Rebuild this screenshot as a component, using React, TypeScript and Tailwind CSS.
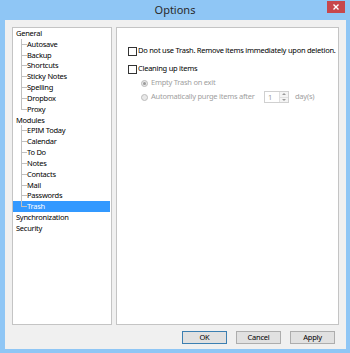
import React from "react";

const font = { fontFamily: '"Noto Sans", "Segoe UI", sans-serif' };

type Node = { label: string; children?: string[] };
const tree: Node[] = [
  { label: "General", children: ["Autosave", "Backup", "Shortcuts", "Sticky Notes", "Spelling", "Dropbox", "Proxy"] },
  { label: "Modules", children: ["EPIM Today", "Calendar", "To Do", "Notes", "Contacts", "Mail", "Passwords", "Trash"] },
  { label: "Synchronization" },
  { label: "Security" },
];

function Row({ label, child, last, selected }: { label: string; child?: boolean; last?: boolean; selected?: boolean }) {
  return (
    <div className={`flex h-[10.83px] items-stretch ${selected ? "bg-[#3399ff] mr-[1px]" : ""}`}>
      {child ? (
        <div className="ml-[8px] w-[6px] flex flex-col">
          <div className="flex-1 border-l border-b border-[#c0c0c0]" />
          <div className={`flex-1 ${last ? "" : "border-l border-[#c0c0c0]"}`} />
        </div>
      ) : (
        <div className="w-[3px]" />
      )}
      <span className={`leading-[10.83px] whitespace-nowrap ${selected ? "text-white" : "text-black"}`}>{label}</span>
    </div>
  );
}

export default function App() {
  return (
    <div className="w-[350px] h-[353px] bg-[#8fc6f5] flex flex-col text-[7.5px] tracking-[-0.25px]" style={font}>
      <div className="h-[20px] relative flex items-center justify-center shrink-0">
        <span className="text-[11px] tracking-normal text-[#2a2a2a]">Options</span>
        <div className="absolute right-[5px] top-[1px] w-[18px] h-[12px] bg-[#c7474c] flex items-center justify-center">
          <svg width="6" height="6" viewBox="0 0 6 6">
            <path d="M0.5 0.5 L5.5 5.5 M5.5 0.5 L0.5 5.5" stroke="white" strokeWidth="1.4" />
          </svg>
        </div>
      </div>
      <div className="flex-1 ml-[5px] mr-[4px] mb-[4px] bg-[#f0f0f0] flex flex-col px-[7px] pt-[7px]">
        <div className="flex gap-[4px] h-[298px]">
          <div className="w-[100px] bg-white border border-[#c4c4c4]">
            {tree.map((n) => (
              <React.Fragment key={n.label}>
                <Row label={n.label} />
                {n.children?.map((c, i) => (
                  <Row key={c} label={c} child last={i === n.children!.length - 1} selected={c === "Trash"} />
                ))}
              </React.Fragment>
            ))}
          </div>
          <div className="flex-1 bg-white border border-[#c4c4c4] pl-[11px] pt-[18px] whitespace-nowrap">
            <div className="flex items-center gap-[1px] h-[10px]">
              <span className="w-[9px] h-[9px] border border-[#333] bg-white shrink-0" />
              <span className="text-black">Do not use Trash. Remove items immediately upon deletion.</span>
            </div>
            <div className="flex items-center gap-[1px] h-[10px] mt-[8px]">
              <span className="w-[9px] h-[9px] border border-[#333] bg-white shrink-0" />
              <span className="text-black">Cleaning up items</span>
            </div>
            <div className="flex items-center h-[10px] mt-[4px] ml-[13px] gap-[3px]">
              <span className="w-[7px] h-[7px] rounded-full border border-[#bcbcbc] bg-[#e8e8e8] flex items-center justify-center">
                <span className="w-[3px] h-[3px] rounded-full bg-[#9a9a9a]" />
              </span>
              <span className="text-[#a0a0a0]">Empty Trash on exit</span>
            </div>
            <div className="flex items-center h-[12px] mt-[3px] ml-[13px] gap-[3px]">
              <span className="w-[7px] h-[7px] rounded-full border border-[#bcbcbc] bg-[#e8e8e8] shrink-0" />
              <span className="text-[#a0a0a0] w-[110px]">Automatically purge items after</span>
              <div className="w-[25px] h-[12px] border border-[#d0d0d0] bg-white flex">
                <span className="flex-1 text-[#a0a0a0] pl-[3px] leading-[10px]">1</span>
                <div className="w-[9px] flex flex-col border-l border-[#e0e0e0]">
                  <div className="flex-1 bg-[#f4f4f4] flex items-center justify-center border-b border-[#e0e0e0]">
                    <svg width="4" height="2" viewBox="0 0 4 2"><path d="M0 2 L2 0 L4 2 Z" fill="#9a9a9a" /></svg>
                  </div>
                  <div className="flex-1 bg-[#f4f4f4] flex items-center justify-center">
                    <svg width="4" height="2" viewBox="0 0 4 2"><path d="M0 0 L2 2 L4 0 Z" fill="#9a9a9a" /></svg>
                  </div>
                </div>
              </div>
              <span className="text-[#a0a0a0] ml-[3px]">day(s)</span>
            </div>
          </div>
        </div>
        <div className="flex justify-end gap-[9px] mt-[6px] pr-[4px]">
          <button className="w-[45px] h-[13px] bg-[#e1e1e1] border border-[#3c7fb1] text-black text-[7.5px] leading-[11px]">OK</button>
          <button className="w-[45px] h-[13px] bg-[#e1e1e1] border border-[#adadad] text-black text-[7.5px] leading-[11px]">Cancel</button>
          <button className="w-[45px] h-[13px] bg-[#e1e1e1] border border-[#adadad] text-black text-[7.5px] leading-[11px]">Apply</button>
        </div>
      </div>
    </div>
  );
}
